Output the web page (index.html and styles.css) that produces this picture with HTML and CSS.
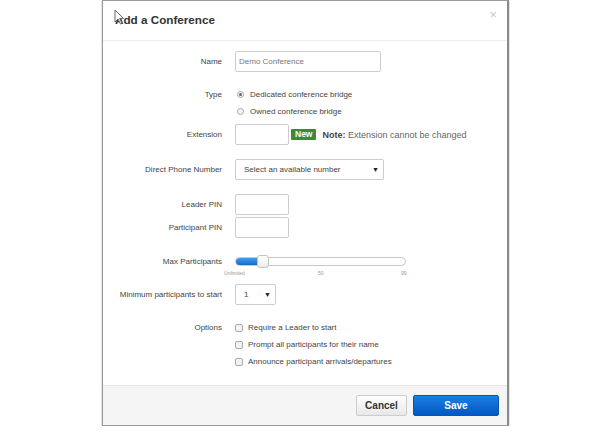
FILE: index.html
```html
<!DOCTYPE html>
<html lang="en">
<head>
    <meta charset="UTF-8">
    <title>Add a Conference</title>
    <link rel="stylesheet" href="styles.css">
</head>
<body>
    <div class="modal">
        <div class="modal-header">
            <h3>Add a Conference</h3>
            <span class="close">&times;</span>
            <svg class="cursor" width="11" height="16" viewBox="0 0 11 16">
                <path d="M1 1 L1 13 L4 10 L6.5 15 L8 14.3 L5.6 9.4 L9.5 9.4 Z" fill="#fff" stroke="#666" stroke-width="1"/>
            </svg>
        </div>

        <div class="modal-body">
            <div class="row row-name">
                <label>Name</label>
                <div><input class="text wide" type="text" placeholder="Demo Conference"></div>
            </div>

            <div class="row row-type">
                <label class="top">Type</label>
                <div class="stack">
                    <div class="choice"><span class="radio checked"></span>Dedicated conference bridge</div>
                    <div class="choice"><span class="radio"></span>Owned conference bridge</div>
                </div>
            </div>

            <div class="row row-ext">
                <label>Extension</label>
                <div class="inline">
                    <input class="text short" type="text">
                    <span class="badge">New</span>
                    <span class="note"><b>Note:</b> Extension cannot be changed</span>
                </div>
            </div>

            <div class="row row-phone">
                <label>Direct Phone Number</label>
                <div><div class="select wide-select">Select an available number<span class="caret">&#9660;</span></div></div>
            </div>

            <div class="row row-leader">
                <label>Leader PIN</label>
                <div><input class="text short" type="text"></div>
            </div>

            <div class="row row-pin">
                <label>Participant PIN</label>
                <div><input class="text short" type="text"></div>
            </div>

            <div class="row row-max">
                <label>Max Participants</label>
                <div class="slider">
                    <div class="track"><div class="fill" style="width: 26px;"></div></div>
                    <div class="handle" style="left: 22px;"></div>
                </div>
            </div>
            <div class="scale">
                <span>Unlimited</span>
                <span>50</span>
                <span>99</span>
            </div>

            <div class="row row-min">
                <label>Minimum participants to start</label>
                <div><div class="select small-select">1<span class="caret">&#9660;</span></div></div>
            </div>

            <div class="row row-options">
                <label class="top">Options</label>
                <div class="stack">
                    <div class="choice"><span class="check"></span>Require a Leader to start</div>
                    <div class="choice"><span class="check"></span>Prompt all participants for their name</div>
                    <div class="choice"><span class="check"></span>Announce participant arrivals/departures</div>
                </div>
            </div>
        </div>

        <div class="modal-footer">
            <button class="btn cancel">Cancel</button>
            <button class="btn save">Save</button>
        </div>
    </div>
</body>
</html>
```

FILE: styles.css
```css
* {
    box-sizing: border-box;
}
body {
    margin: 0;
    background: #fff;
    font-family: "Liberation Sans", Arial, sans-serif;
    color: #444;
}
.modal {
    margin-left: 102px;
    width: 407px;
    height: 426px;
    background: #fff;
    border: 1px solid #999;
    border-right: 2px solid #8a8a8a;
    box-shadow: 0 1px 1px rgba(0, 0, 0, 0.6);
    display: flex;
    flex-direction: column;
}
.modal-header {
    position: relative;
    height: 40px;
    border-bottom: 1px solid #eee;
    padding: 12px 0 0 12px;
}
.modal-header h3 {
    margin: 0;
    font-size: 11.7px;
    font-weight: bold;
    color: #333;
}
.close {
    position: absolute;
    right: 10px;
    top: 6px;
    font-size: 13px;
    color: #c8c8c8;
}
.cursor {
    position: absolute;
    left: 11px;
    top: 8px;
}
.modal-body {
    flex: 1;
    padding-top: 10px;
}
.row {
    display: grid;
    grid-template-columns: 119px 1fr;
    column-gap: 13px;
    align-items: center;
    font-size: 8px;
}
.row label {
    text-align: right;
    color: #444;
}
.row label.top {
    align-self: start;
    line-height: 17px;
}
.text {
    display: block;
    height: 21px;
    border: 1px solid #ccc;
    border-radius: 2px;
    padding: 0 3px;
    font-family: inherit;
    font-size: 8px;
    color: #555;
    background: #fff;
}
.text::placeholder {
    color: #777;
}
.wide {
    width: 146px;
}
.short {
    width: 54px;
}
.row-type {
    margin-top: 14px;
}
.stack .choice {
    display: flex;
    align-items: center;
    height: 17px;
    color: #444;
}
.radio {
    width: 7px;
    height: 7px;
    border: 1px solid #aaa;
    border-radius: 50%;
    margin: 0 6px 0 2px;
    background: #f4f4f4;
    position: relative;
}
.radio.checked::after {
    content: "";
    position: absolute;
    left: 1px;
    top: 1px;
    width: 3px;
    height: 3px;
    border-radius: 50%;
    background: #666;
}
.check {
    width: 8px;
    height: 8px;
    border: 1px solid #aaa;
    border-radius: 2px;
    margin: 0 5px 0 0;
    background: #f2f2f2;
}
.row-ext {
    margin-top: 4px;
}
.inline {
    display: flex;
    align-items: center;
}
.badge {
    margin-left: 2px;
    background: #3b8b3b;
    color: #fff;
    font-weight: bold;
    font-size: 8.5px;
    line-height: 11px;
    padding: 0 4px;
    border-radius: 1px;
    margin-top: -1px;
}
.note {
    margin-left: 6px;
    font-size: 9px;
    color: #666;
}
.note b {
    color: #444;
}
.row-phone {
    margin-top: 14px;
}
.select {
    position: relative;
    height: 21px;
    border: 1px solid #ccc;
    border-radius: 2px;
    padding-left: 8px;
    line-height: 19px;
    color: #444;
    background: #fff;
}
.wide-select {
    width: 149px;
}
.small-select {
    width: 41px;
}
.caret {
    position: absolute;
    right: 4px;
    top: 0;
    font-size: 7px;
    color: #222;
}
.row-leader {
    margin-top: 14px;
}
.row-pin {
    margin-top: 2px;
}
.row-max {
    margin-top: 14px;
    height: 18px;
}
.slider {
    position: relative;
    width: 171px;
    height: 13px;
}
.track {
    position: absolute;
    left: 0;
    right: 0;
    top: 2px;
    height: 9px;
    border: 1px solid #c8c8c8;
    border-radius: 5px;
    background: #fff;
    overflow: hidden;
}
.fill {
    height: 100%;
    background: linear-gradient(#4a9be6, #1668c8);
}
.handle {
    position: absolute;
    top: 0;
    width: 12px;
    height: 13px;
    border: 1px solid #c4c4c4;
    border-radius: 3px;
    background: linear-gradient(#fff, #ececec);
}
.scale {
    display: grid;
    grid-template-columns: 94px 83px auto;
    margin-left: 121px;
    font-size: 5px;
    color: #999;
    line-height: 7px;
}
.row-min {
    margin-top: 7px;
}
.row-options {
    margin-top: 14px;
}
.modal-footer {
    height: 40px;
    border-top: 1px solid #e4e4e4;
    background: #f5f5f5;
    display: flex;
    justify-content: flex-end;
    align-items: center;
    gap: 6px;
    padding-right: 8px;
}
.btn {
    height: 21px;
    border-radius: 2px;
    font-family: inherit;
    font-weight: bold;
    font-size: 10px;
    cursor: pointer;
}
.cancel {
    width: 51px;
    border: 1px solid #ccc;
    background: linear-gradient(#fff, #e8e8e8);
    color: #333;
}
.save {
    width: 86px;
    border: 1px solid #0b55b0;
    background: linear-gradient(#1c7fe0, #0058c4);
    color: #fff;
}
```
